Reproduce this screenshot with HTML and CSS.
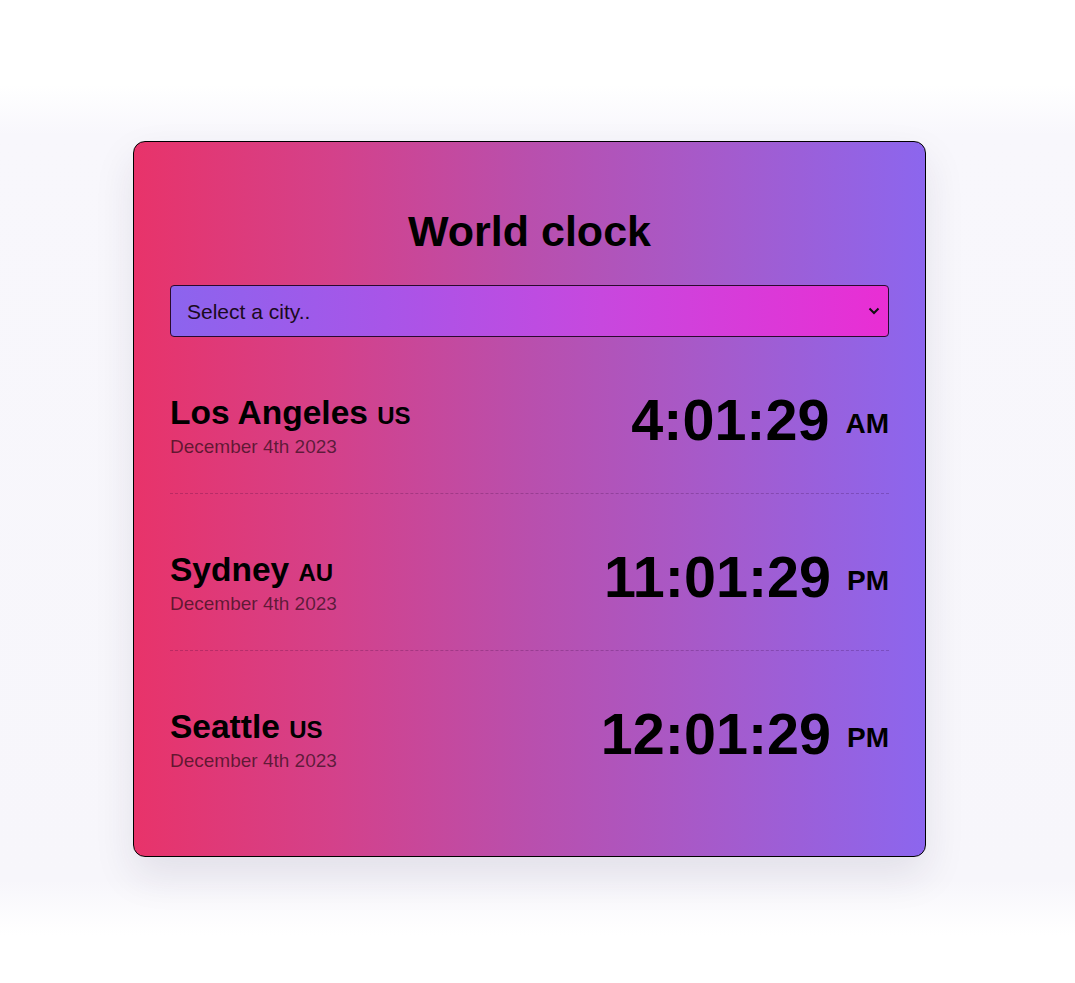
FILE: index.html
```html
<!DOCTYPE html>
<html lang="en">
<head>
<meta charset="utf-8">
<title>World clock</title>
<link rel="stylesheet" href="styles.css">
</head>
<body>
<div class="page">
  <main class="card">
    <h1 class="title">World clock</h1>
    <div class="select-wrap">
      <select class="city-select">
        <option>Select a city..</option>
        <option>Los Angeles</option>
        <option>Sydney</option>
        <option>Seattle</option>
      </select>
      <svg class="chevron" width="12" height="8" viewBox="0 0 12 8"><path d="M1.5 1.5 L6 6 L10.5 1.5" fill="none" stroke="#111" stroke-width="2"/></svg>
    </div>
    <div class="cities">
      <div class="city">
        <div class="city-info">
          <div class="city-name">Los Angeles <span class="code">US</span></div>
          <div class="date">December 4th 2023</div>
        </div>
        <div class="time">4:01:29 <span class="ampm">AM</span></div>
      </div>
      <div class="city">
        <div class="city-info">
          <div class="city-name">Sydney <span class="code">AU</span></div>
          <div class="date">December 4th 2023</div>
        </div>
        <div class="time">11:01:29 <span class="ampm">PM</span></div>
      </div>
      <div class="city">
        <div class="city-info">
          <div class="city-name">Seattle <span class="code">US</span></div>
          <div class="date">December 4th 2023</div>
        </div>
        <div class="time">12:01:29 <span class="ampm">PM</span></div>
      </div>
    </div>
  </main>
</div>
</body>
</html>
```

FILE: styles.css
```css
html {
  background: #ffffff;
}

body {
  margin: 0;
  padding: 0;
  min-height: 983px;
  background: linear-gradient(180deg, #ffffff 0px, #ffffff 85px, #f8f7fc 135px, #f7f6fb 880px, #ffffff 935px, #ffffff 983px);
  font-family: "Liberation Sans", Arial, sans-serif;
  color: #000;
}

.page {
  padding: 141px 0 0 133px;
}

.card {
  box-sizing: border-box;
  width: 793px;
  height: 716px;
  padding: 65px 36px 46px;
  border: 1px solid #000;
  border-radius: 12px;
  background: linear-gradient(90deg, #e8336a 0%, #d4418a 25%, #b94fad 50%, #a45bcd 75%, #8c66ee 100%);
  box-shadow: 0 18px 40px rgba(40, 30, 70, 0.10);
}

.title {
  margin: 0;
  font-size: 43px;
  line-height: 49px;
  font-weight: 700;
  text-align: center;
}

.select-wrap {
  position: relative;
  margin-top: 29px;
}

.city-select {
  appearance: none;
  -webkit-appearance: none;
  display: block;
  box-sizing: border-box;
  width: 100%;
  height: 52px;
  padding: 0 40px 0 16px;
  border: 1px solid #2a0a2e;
  border-radius: 4px;
  background: linear-gradient(90deg, #8c64ee 0%, #a855e8 30%, #c748de 60%, #e92ed4 100%);
  font-family: "Liberation Sans", Arial, sans-serif;
  font-size: 21px;
  color: #1a0a20;
}

.chevron {
  position: absolute;
  right: 9px;
  top: 22px;
}

.city {
  display: flex;
  justify-content: space-between;
  align-items: flex-start;
  padding: 50px 0 35px;
  border-bottom: 1px dashed rgba(40, 0, 50, 0.22);
}

.city:last-child {
  border-bottom: none;
}

.city-info {
  padding-top: 6px;
}

.city-name {
  font-size: 33.5px;
  line-height: 40px;
  font-weight: 700;
}

.code {
  font-size: 24px;
  line-height: 1;
  font-weight: 700;
}

.date {
  margin-top: 2px;
  font-size: 19px;
  line-height: 23px;
  color: rgba(0, 0, 0, 0.58);
}

.time {
  font-size: 57.5px;
  line-height: 67px;
  font-weight: 700;
  white-space: nowrap;
}

.ampm {
  display: inline-block;
  font-size: 28px;
  line-height: 28px;
  vertical-align: 7px;
}
```
